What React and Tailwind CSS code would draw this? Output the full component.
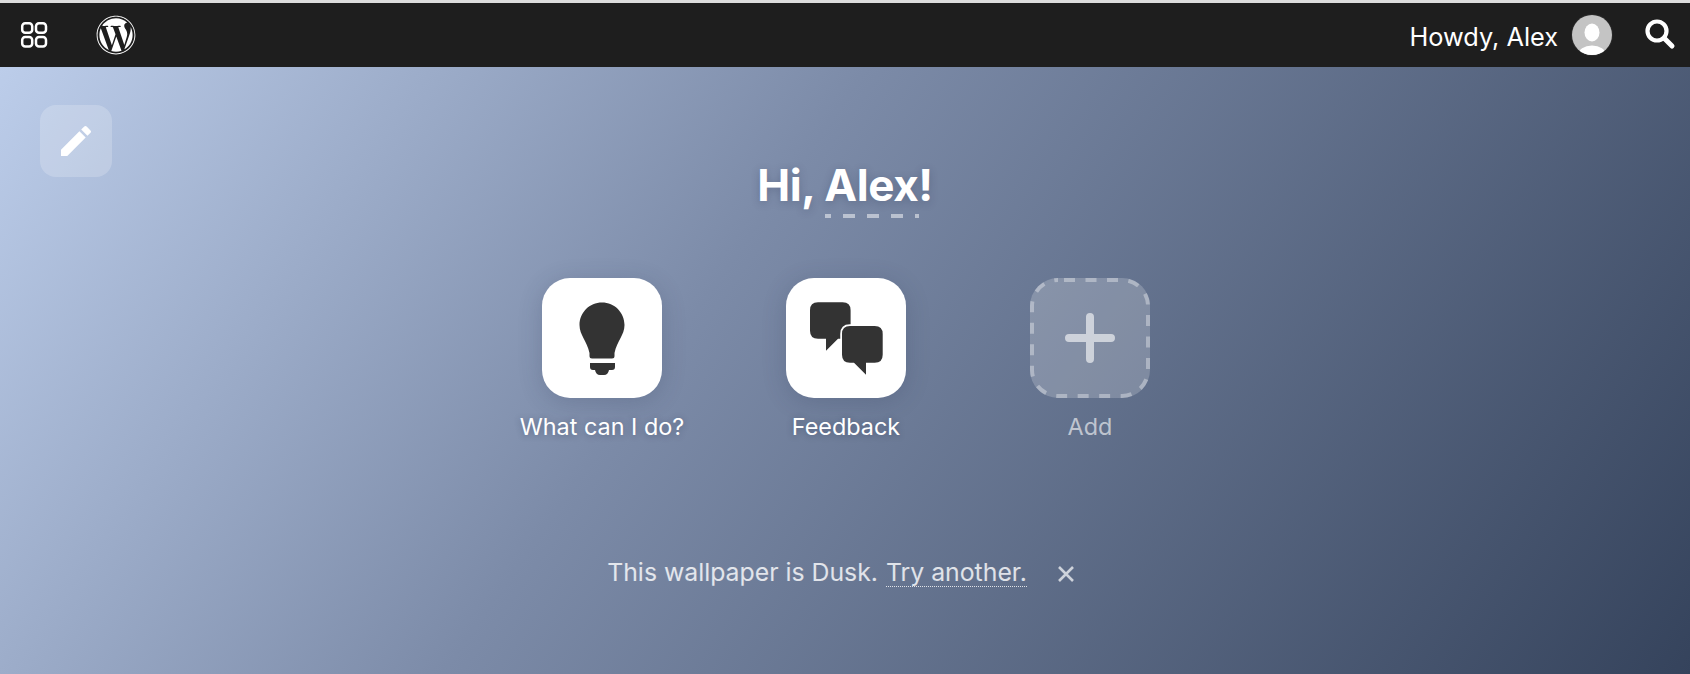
import React from 'react';
import { FaWordpress } from 'react-icons/fa';

function AppsIcon() {
  return (
    <svg width="28" height="28" viewBox="0 0 28 28" fill="none" stroke="white" strokeWidth="2.5">
      <rect x="2.2" y="2.2" width="10" height="9.5" rx="3" />
      <rect x="16" y="2.2" width="10" height="9.5" rx="3" />
      <rect x="2.2" y="16" width="10" height="9.5" rx="3" />
      <rect x="16" y="16" width="10" height="9.5" rx="3" />
    </svg>
  );
}

function SearchIcon() {
  return (
    <svg width="32" height="32" viewBox="0 0 32 32" fill="none" stroke="white" strokeLinecap="round">
      <circle cx="13" cy="12" r="9.5" strokeWidth="4.2" />
      <path d="M20.5 19.5 L28 27" strokeWidth="5" />
    </svg>
  );
}

function Avatar() {
  return (
    <svg width="42" height="42" viewBox="0 0 42 42">
      <defs>
        <clipPath id="avatar-clip"><circle cx="21" cy="21" r="20" /></clipPath>
      </defs>
      <circle cx="21" cy="21" r="21" fill="#2a2a2a" />
      <g clipPath="url(#avatar-clip)">
        <rect width="42" height="42" fill="#c4c4c4" />
        <ellipse cx="21" cy="18.5" rx="7.5" ry="9" fill="white" />
        <ellipse cx="21" cy="41" rx="14" ry="9.5" fill="white" />
      </g>
    </svg>
  );
}

function PencilIcon() {
  return (
    <svg width="40" height="40" viewBox="0 0 24 24" fill="white">
      <path d="M3 17.25V21h3.75L17.81 9.94l-3.75-3.75L3 17.25zM20.71 7.04a.996.996 0 000-1.41l-2.34-2.34a.996.996 0 00-1.41 0l-1.83 1.83 3.75 3.75 1.83-1.83z" />
    </svg>
  );
}

function BulbIcon() {
  return (
    <svg width="120" height="120" viewBox="0 0 120 120" fill="#333">
      <path d="M60 24.5C47.5 24.5 37.5 34.5 37.5 47C37.5 57 45 63 47.5 75V78Q47.5 80.5 50 80.5H70Q72.5 80.5 72.5 78V75C75 63 82.5 57 82.5 47C82.5 34.5 72.5 24.5 60 24.5Z" />
      <path d="M48 85H73V89Q73 92 70 92H67Q66 97 62 97H58Q54 97 53 92H51Q48 92 48 89Z" />
    </svg>
  );
}

function ChatIcon() {
  return (
    <svg width="120" height="120" viewBox="0 0 120 120" fill="#333">
      <path d="M32 24.3H56.6Q64.6 24.3 64.6 32.3V52.7Q64.6 60.7 56.6 60.7H52L40 72.7V60.7H32Q24 60.7 24 52.7V32.3Q24 24.3 32 24.3Z" />
      <path
        d="M64 48H88.7Q96.7 48 96.7 56V76.7Q96.7 84.7 88.7 84.7H80V96.7L68 84.7H64Q56 84.7 56 76.7V56Q56 48 64 48Z"
        stroke="white"
        strokeWidth="3.5"
        paintOrder="stroke"
      />
    </svg>
  );
}

function AddIcon() {
  return (
    <svg width="120" height="120" viewBox="0 0 120 120" fill="none" strokeLinecap="round" className="absolute inset-0">
      <rect x="2" y="2" width="116" height="116" rx="26" stroke="white" strokeOpacity="0.35" strokeWidth="4" strokeDasharray="11 10.5" strokeDashoffset="-6" strokeLinecap="butt" />
      <path d="M60 39V81M39 60H81" stroke="white" strokeOpacity="0.6" strokeWidth="8" />
    </svg>
  );
}

function Tile({ label, muted, children }) {
  return (
    <div className="flex w-[244px] flex-col items-center">
      <div className={muted
        ? 'relative h-[120px] w-[120px] rounded-[28px] bg-white/20'
        : 'h-[120px] w-[120px] rounded-[28px] bg-white shadow-[0_4px_24px_rgba(40,50,80,0.2)]'}>
        {children}
      </div>
      <div className={muted
        ? 'mt-[15px] text-[23.4px] leading-[28px] text-white/60'
        : 'mt-[15px] text-[23.4px] leading-[28px] text-white [text-shadow:0_1px_6px_rgba(30,40,70,0.35)]'}>
        {label}
      </div>
    </div>
  );
}

export default function App() {
  return (
    <div className="flex h-[674px] w-[1690px] flex-col overflow-hidden bg-[#dcdcdc] pt-[3px] font-['Inter',sans-serif]">
      <header className="flex h-[64px] shrink-0 items-center bg-[#1e1e1e] pl-[20px] pr-[14px]">
        <AppsIcon />
        <div className="ml-[48px]">
          <FaWordpress size={40} color="white" />
        </div>
        <div className="ml-auto flex items-center">
          <span className="mt-[3px] text-[25.3px] leading-none text-white">Howdy, Alex</span>
          <div className="ml-[13px]"><Avatar /></div>
          <div className="ml-[31px]"><SearchIcon /></div>
        </div>
      </header>

      <main className="relative flex flex-1 flex-col items-center bg-[linear-gradient(125deg,#bccdea_0%,#7c8ba8_41%,#35435c_100%)]">
        <button className="absolute left-[40px] top-[38px] flex h-[72px] w-[72px] items-center justify-center rounded-[16px] bg-white/20">
          <PencilIcon />
        </button>

        <h1 className="mt-[88px] text-[44px] font-bold leading-[60px] tracking-[-0.4px] text-white [text-shadow:0_2px_8px_rgba(30,40,70,0.25)]">
          Hi, <span className="relative inline-block">Alex
            <span className="absolute bottom-[-3px] left-[1px] h-[4px] w-[94px] bg-[repeating-linear-gradient(90deg,rgba(255,255,255,0.5)_0_6px,transparent_6px_18px,rgba(255,255,255,0.5)_18px_24px)]" />
          </span>!
        </h1>

        <div className="mt-[63px] flex pl-[2px]">
          <Tile label="What can I do?"><BulbIcon /></Tile>
          <Tile label="Feedback"><ChatIcon /></Tile>
          <Tile label="Add" muted><AddIcon /></Tile>
        </div>

        <div className="mt-[115px] flex items-center pr-[8px] text-[24.8px] leading-[32px] text-white/80">
          <span>This wallpaper is Dusk.</span>
          <span className="ml-[8px] border-b border-dotted border-white/80 leading-[28px]">Try another.</span>
          <svg width="18" height="18" viewBox="0 0 18 18" stroke="white" strokeOpacity="0.7" strokeWidth="2.6" className="ml-[30px] mt-[4px]">
            <path d="M2 2L16 16M16 2L2 16" />
          </svg>
        </div>
      </main>
    </div>
  );
}
